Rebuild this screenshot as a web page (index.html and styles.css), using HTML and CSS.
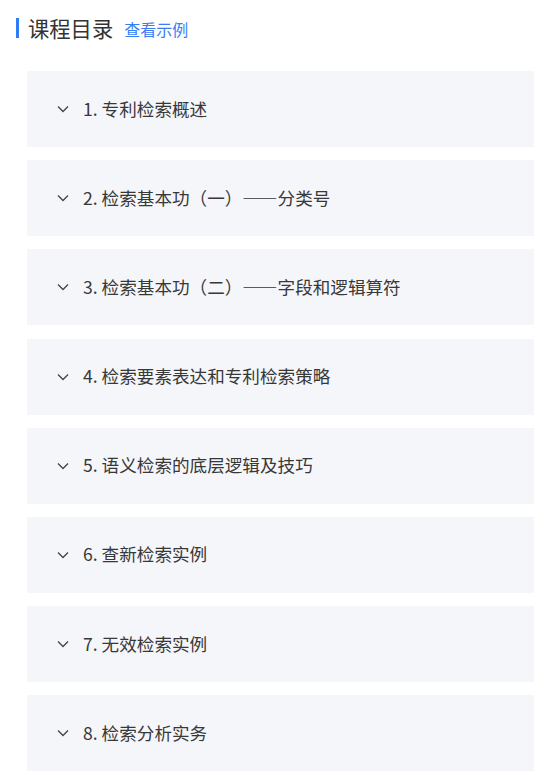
FILE: index.html
```html
<!DOCTYPE html>
<html lang="zh-CN">
<head>
    <meta charset="UTF-8">
    <meta name="viewport" content="width=device-width, initial-scale=1.0">
    <title>课程目录</title>
    <link rel="stylesheet" href="styles.css">
</head>
<body>
    <div class="catalog">
        <div class="catalog-header">
            <h2 class="catalog-title">课程目录</h2>
            <a class="catalog-link" href="#">查看示例</a>
        </div>

        <ul class="chapter-list">
            <li class="chapter">
                <svg class="chevron" viewBox="0 0 12 8"><path d="M1 1.5l5 5 5-5"/></svg>
                <span>1. 专利检索概述</span>
            </li>
            <li class="chapter">
                <svg class="chevron" viewBox="0 0 12 8"><path d="M1 1.5l5 5 5-5"/></svg>
                <span>2. 检索基本功（一）——分类号</span>
            </li>
            <li class="chapter">
                <svg class="chevron" viewBox="0 0 12 8"><path d="M1 1.5l5 5 5-5"/></svg>
                <span>3. 检索基本功（二）——字段和逻辑算符</span>
            </li>
            <li class="chapter">
                <svg class="chevron" viewBox="0 0 12 8"><path d="M1 1.5l5 5 5-5"/></svg>
                <span>4. 检索要素表达和专利检索策略</span>
            </li>
            <li class="chapter">
                <svg class="chevron" viewBox="0 0 12 8"><path d="M1 1.5l5 5 5-5"/></svg>
                <span>5. 语义检索的底层逻辑及技巧</span>
            </li>
            <li class="chapter">
                <svg class="chevron" viewBox="0 0 12 8"><path d="M1 1.5l5 5 5-5"/></svg>
                <span>6. 查新检索实例</span>
            </li>
            <li class="chapter">
                <svg class="chevron" viewBox="0 0 12 8"><path d="M1 1.5l5 5 5-5"/></svg>
                <span>7. 无效检索实例</span>
            </li>
            <li class="chapter">
                <svg class="chevron" viewBox="0 0 12 8"><path d="M1 1.5l5 5 5-5"/></svg>
                <span>8. 检索分析实务</span>
            </li>
        </ul>
    </div>
</body>
</html>
```

FILE: styles.css
```css
* {
    margin: 0;
    padding: 0;
    box-sizing: border-box;
    font-family: "Noto Sans CJK SC", "Noto Sans", sans-serif;
}

body {
    background-color: #ffffff;
    color: #333333;
}

.catalog {
    padding: 18px 0 0 16px;
}

.catalog-header {
    display: flex;
    align-items: center;
    height: 20px;
    border-left: 3px solid #2f7cf6;
    padding-left: 9px;
}

.catalog-title {
    font-size: 21.3px;
    font-weight: 400;
    color: #333333;
    line-height: 20px;
}

.catalog-link {
    margin-left: 11px;
    font-size: 16px;
    color: #3a7ef5;
    text-decoration: none;
    line-height: 20px;
    margin-top: 2px;
}

.chapter-list {
    list-style: none;
    margin-top: 33px;
    padding-left: 11px;
}

.chapter {
    display: flex;
    align-items: center;
    height: 76px;
    margin-bottom: 13.2px;
    padding-left: 30px;
    background-color: #f5f6fa;
    font-size: 17.6px;
    color: #383838;
}

.chapter span {
    margin-top: -2px;
}

.chevron {
    width: 12px;
    height: 8px;
    margin-right: 14px;
    fill: none;
    stroke: #444444;
    stroke-width: 1.3;
}
```
